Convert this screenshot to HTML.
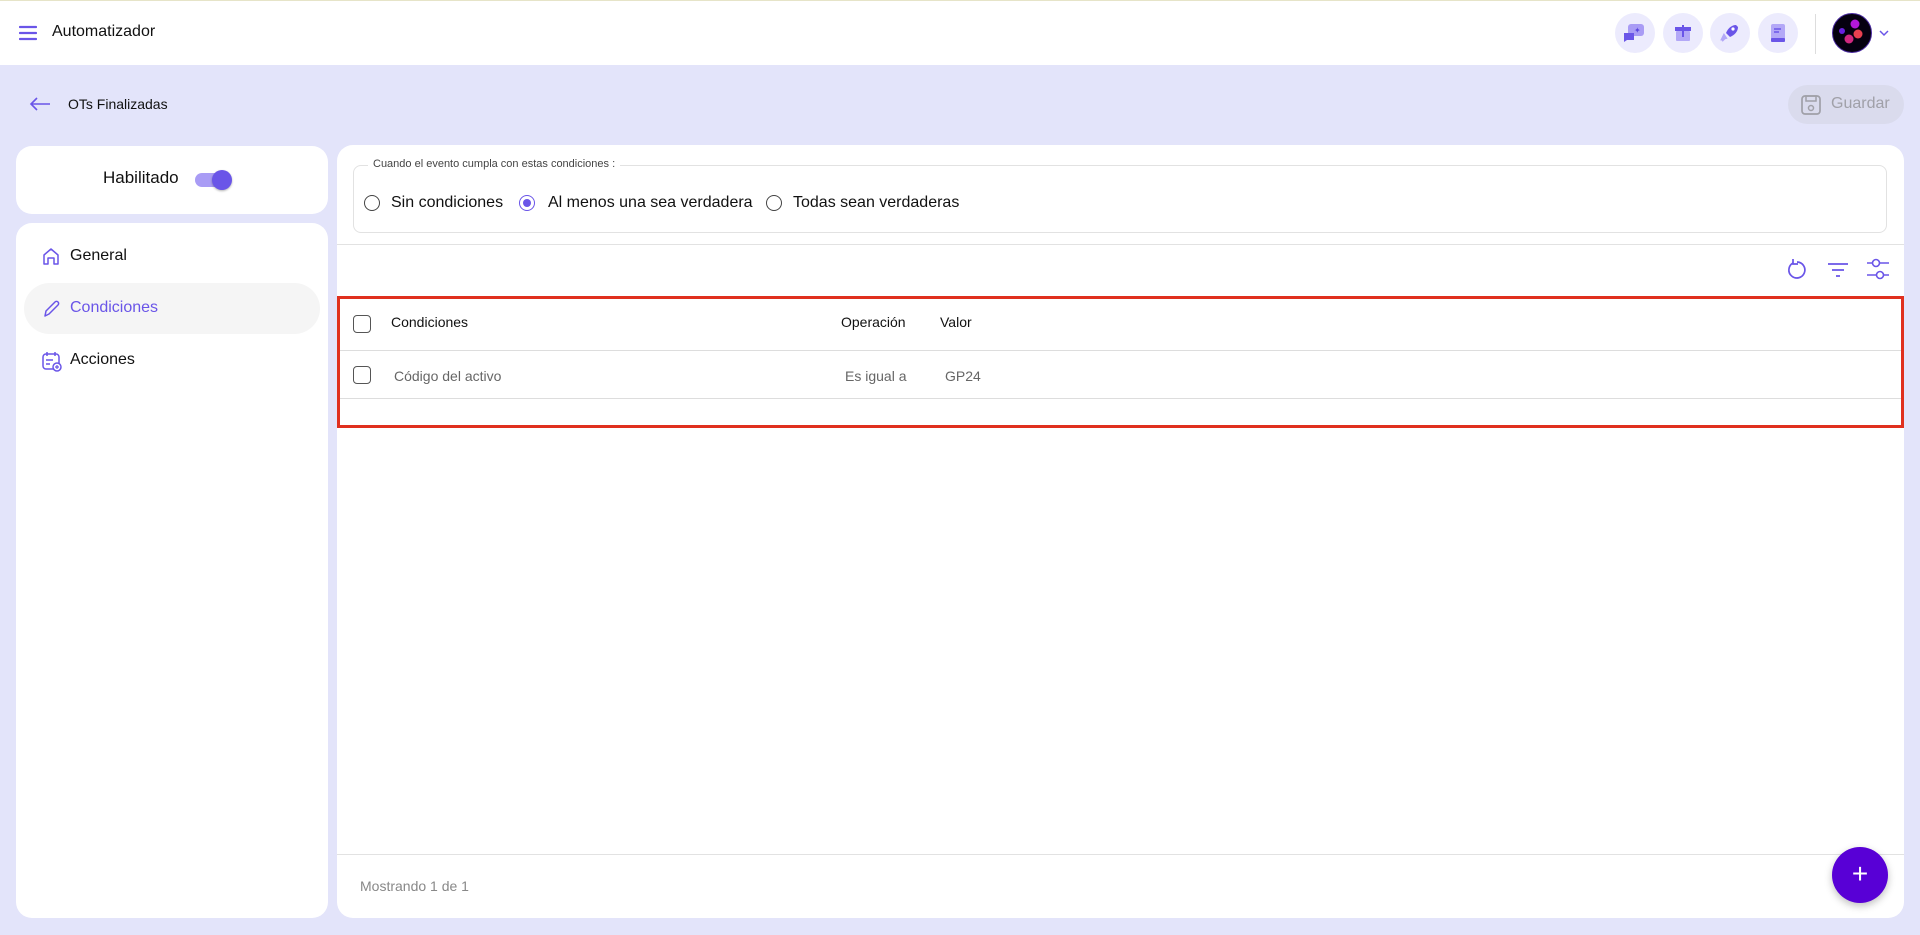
<!DOCTYPE html>
<html><head><meta charset="utf-8"><style>
*{box-sizing:border-box;margin:0;padding:0}
body{width:1920px;height:935px;background:#e3e4fa;font-family:"Liberation Sans",Arial,sans-serif;color:#111;position:relative;overflow:hidden}
.abs{position:absolute}
.top{left:0;top:0;width:1920px;height:65px;background:#fff;border-top:1px solid #e6e4c8}
.ic{width:40px;height:40px;border-radius:50%;background:#ecebfd;top:12px}
.card{background:#fff;border-radius:16px}
.t{white-space:nowrap}
.radio{width:16px;height:16px;border:1.5px solid #444;border-radius:50%}
.cb{width:18px;height:18px;border:1.5px solid #555;border-radius:4px}
</style></head><body>
<div class="abs top">
  <svg class="abs" style="left:19px;top:24px" width="18" height="16"><g stroke="#6a55e8" stroke-width="2.2" stroke-linecap="round"><line x1="1" y1="2" x2="17" y2="2"/><line x1="1" y1="8" x2="17" y2="8"/><line x1="1" y1="14" x2="17" y2="14"/></g></svg>
  <div class="abs t" style="left:52px;top:22px;font-size:16px">Automatizador</div>
  <div class="abs ic" style="left:1615px"><svg width="40" height="40"><rect x="13" y="11" width="16" height="12" rx="3" fill="#a99cf5"/><path d="M9 20h10v7H12l-3 2z" fill="#6a55e8"/><text x="19" y="20" font-size="8" fill="#5a45e0">✦</text></svg></div>
  <div class="abs ic" style="left:1663px"><svg width="40" height="40"><rect x="12" y="14" width="16" height="4" fill="#6a55e8"/><rect x="13" y="18" width="14" height="10" rx="1" fill="#b3a8f7"/><rect x="19" y="12" width="2" height="12" fill="#6a55e8"/></svg></div>
  <div class="abs ic" style="left:1710px"><svg width="40" height="40"><path d="M26 12c-4 0-8 3-10 8l4 4c5-2 8-6 8-10z" fill="#6a55e8"/><circle cx="23" cy="16" r="1.6" fill="#fff"/><path d="M14 22l-2 4 4-1zM12 28l3-3" stroke="#b3a8f7" stroke-width="2" fill="#b3a8f7"/></svg></div>
  <div class="abs ic" style="left:1758px"><svg width="40" height="40"><rect x="13" y="11" width="14" height="18" rx="2" fill="#b3a8f7"/><rect x="13" y="25" width="14" height="4" rx="1" fill="#6a55e8"/><line x1="16" y1="16" x2="23" y2="16" stroke="#6a55e8" stroke-width="1.5"/><line x1="16" y1="19" x2="21" y2="19" stroke="#6a55e8" stroke-width="1.5"/></svg></div>
  <div class="abs" style="left:1815px;top:13px;width:1px;height:40px;background:#ddd"></div>
  <svg class="abs" style="left:1832px;top:12px" width="40" height="40"><circle cx="20" cy="20" r="19.5" fill="#050010" stroke="#4a2aa0" stroke-width="1"/><circle cx="23" cy="11" r="4.5" fill="#b318d8"/><circle cx="10" cy="18" r="3" fill="#6a20e0"/><circle cx="26" cy="21" r="4.5" fill="#e84050"/><circle cx="17" cy="26" r="4.5" fill="#d02880"/></svg>
  <svg class="abs" style="left:1879px;top:28px" width="10" height="8"><path d="M1 2l4 4 4-4" stroke="#6a55e8" stroke-width="1.5" fill="none"/></svg>
</div>
<svg class="abs" style="left:29px;top:96px" width="22" height="16"><path d="M21 8H2M8 2L2 8l6 6" stroke="#6a55e8" stroke-width="1.6" fill="none"/></svg>
<div class="abs t" style="left:68px;top:96px;font-size:14px">OTs Finalizadas</div>
<div class="abs" style="left:1788px;top:85px;width:116px;height:39px;border-radius:20px;background:#dadbed"></div>
<svg class="abs" style="left:1800px;top:94px" width="22" height="22"><rect x="2" y="2" width="18" height="18" rx="3" stroke="#a0a0a8" stroke-width="1.7" fill="none"/><rect x="6" y="2" width="10" height="5" stroke="#a0a0a8" stroke-width="1.5" fill="none"/><circle cx="11" cy="14" r="2.5" stroke="#a0a0a8" stroke-width="1.5" fill="none"/></svg>
<div class="abs t" style="left:1831px;top:95px;font-size:16px;color:#a0a0a8">Guardar</div>

<div class="abs card" style="left:16px;top:146px;width:312px;height:68px"></div>
<div class="abs t" style="left:103px;top:168px;font-size:17px">Habilitado</div>
<div class="abs" style="left:195px;top:173px;width:34px;height:14px;border-radius:7px;background:#a99cf5"></div>
<div class="abs" style="left:212px;top:170px;width:20px;height:20px;border-radius:50%;background:#6a55e8;box-shadow:0 1px 2px rgba(0,0,0,.3)"></div>

<div class="abs card" style="left:16px;top:223px;width:312px;height:695px"></div>
<svg class="abs" style="left:41px;top:246px" width="20" height="20"><path d="M3 18V9l7-6 7 6v9h-4v-6H7v6z" stroke="#6a55e8" stroke-width="1.5" fill="none" stroke-linejoin="round"/></svg>
<div class="abs t" style="left:70px;top:247px;font-size:16px">General</div>
<div class="abs" style="left:24px;top:283px;width:296px;height:51px;border-radius:26px;background:#f5f5f5"></div>
<svg class="abs" style="left:42px;top:299px" width="20" height="20"><path d="M3 17l1-5 9-9a2 2 0 013 3l-9 9z" stroke="#6a55e8" stroke-width="1.5" fill="none" stroke-linejoin="round"/></svg>
<div class="abs t" style="left:70px;top:299px;font-size:16px;color:#6a55e8">Condiciones</div>
<svg class="abs" style="left:41px;top:350px" width="22" height="22"><rect x="2" y="4" width="16" height="15" rx="3" stroke="#6a55e8" stroke-width="1.5" fill="none"/><path d="M6 2v4M14 2v4M5 10h7M5 14h4" stroke="#6a55e8" stroke-width="1.5"/><circle cx="16" cy="17" r="4" fill="#fff" stroke="#6a55e8" stroke-width="1.5"/><path d="M16 15v4M14 17h4" stroke="#6a55e8" stroke-width="1.2"/></svg>
<div class="abs t" style="left:70px;top:351px;font-size:16px">Acciones</div>

<div class="abs card" style="left:337px;top:145px;width:1567px;height:773px"></div>
<div class="abs" style="left:353px;top:165px;width:1534px;height:68px;border:1px solid #e2e2e2;border-radius:8px"></div>
<div class="abs t" style="left:368px;top:158px;font-size:11px;color:#444;background:#fff;padding:0 5px">Cuando el evento cumpla con estas condiciones :</div>
<div class="abs radio" style="left:364px;top:195px"></div>
<div class="abs t" style="left:391px;top:194px;font-size:16px">Sin condiciones</div>
<div class="abs radio" style="left:519px;top:195px;border-color:#6a55e8"><div style="margin:2.5px;width:8px;height:8px;border-radius:50%;background:#6a55e8"></div></div>
<div class="abs t" style="left:548px;top:194px;font-size:16px">Al menos una sea verdadera</div>
<div class="abs radio" style="left:766px;top:195px"></div>
<div class="abs t" style="left:793px;top:194px;font-size:16px">Todas sean verdaderas</div>
<div class="abs" style="left:337px;top:244px;width:1567px;height:1px;background:#e2e2e2"></div>

<svg class="abs" style="left:1786px;top:258px" width="22" height="22"><path d="M7 5A8 8 0 1 0 11 4" stroke="#6a55e8" stroke-width="1.7" fill="none"/><path d="M7 1v5h5" stroke="#6a55e8" stroke-width="1.7" fill="none"/></svg>
<svg class="abs" style="left:1827px;top:260px" width="22" height="18"><path d="M1 4h20M5 10h12M9 16h4" stroke="#6a55e8" stroke-width="1.7"/></svg>
<svg class="abs" style="left:1866px;top:257px" width="24" height="24"><g stroke="#6a55e8" stroke-width="1.6" fill="none"><path d="M1 6h5M14 6h9M1 18h9M18 18h5"/><circle cx="10" cy="6" r="3.5"/><circle cx="14" cy="18" r="3.5"/></g></svg>

<div class="abs" style="left:337px;top:296px;width:1567px;height:132px;border:3px solid #e0301e"></div>
<div class="abs cb" style="left:353px;top:315px"></div>
<div class="abs t" style="left:391px;top:314px;font-size:14px">Condiciones</div>
<div class="abs t" style="left:841px;top:314px;font-size:14px">Operación</div>
<div class="abs t" style="left:940px;top:314px;font-size:14px">Valor</div>
<div class="abs" style="left:340px;top:350px;width:1561px;height:1px;background:#ddd"></div>
<div class="abs cb" style="left:353px;top:366px"></div>
<div class="abs t" style="left:394px;top:368px;font-size:14px;color:#666">Código del activo</div>
<div class="abs t" style="left:845px;top:368px;font-size:14px;color:#666">Es igual a</div>
<div class="abs t" style="left:945px;top:368px;font-size:14px;color:#666">GP24</div>
<div class="abs" style="left:340px;top:398px;width:1561px;height:1px;background:#ddd"></div>

<div class="abs" style="left:337px;top:854px;width:1567px;height:1px;background:#e2e2e2"></div>
<div class="abs t" style="left:360px;top:878px;font-size:14px;color:#888">Mostrando 1 de 1</div>
<div class="abs" style="left:1832px;top:847px;width:56px;height:56px;border-radius:50%;background:#5800d6;box-shadow:0 3px 8px rgba(0,0,0,.25);color:#fff;font-size:28px;text-align:center;line-height:54px">+</div>
</body></html>
